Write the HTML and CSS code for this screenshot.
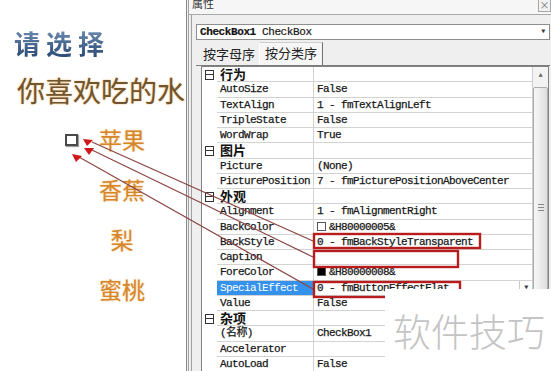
FILE: index.html
```html
<!DOCTYPE html>
<html lang="zh-CN">
<head>
    <meta charset="UTF-8">
    <meta name="viewport" content="width=device-width, initial-scale=1.0">
    <title>属性 - CheckBox1</title>
    <link rel="stylesheet" href="styles.css">
</head>
<body>
    <div class="page">
        <div class="slide">
            <div class="prompt">请选择</div>
            <div class="question">你喜欢吃的水果</div>
            <div class="options">
                <span class="checkbox"></span>
                <ul class="fruits">
                    <li>苹果</li>
                    <li>香蕉</li>
                    <li>梨</li>
                    <li>蜜桃</li>
                </ul>
            </div>
        </div>

        <div class="window">
            <div class="window-inner">
                <div class="titlebar">
                    <span class="title">属性</span>
                    <span class="close">×</span>
                </div>
                <div class="panel">
                    <div class="combo">
                        <span><b>CheckBox1</b> CheckBox</span>
                        <span class="combo-drop">▼</span>
                    </div>
                    <div class="tabs">
                        <span class="tab">按字母序</span>
                        <span class="tab active">按分类序</span>
                    </div>
                    <div class="grid">
                        <div class="rows">
                            <div class="row category"><span class="gutter"><i class="toggle"></i></span><span class="name">行为</span><span class="value"></span></div>
                            <div class="row"><span class="gutter"></span><span class="name">AutoSize</span><span class="value">False</span></div>
                            <div class="row"><span class="gutter"></span><span class="name">TextAlign</span><span class="value">1 - fmTextAlignLeft</span></div>
                            <div class="row"><span class="gutter"></span><span class="name">TripleState</span><span class="value">False</span></div>
                            <div class="row"><span class="gutter"></span><span class="name">WordWrap</span><span class="value">True</span></div>
                            <div class="row category"><span class="gutter"><i class="toggle"></i></span><span class="name">图片</span><span class="value"></span></div>
                            <div class="row"><span class="gutter"></span><span class="name">Picture</span><span class="value">(None)</span></div>
                            <div class="row"><span class="gutter"></span><span class="name">PicturePosition</span><span class="value">7 - fmPicturePositionAboveCenter</span></div>
                            <div class="row category"><span class="gutter"><i class="toggle"></i></span><span class="name">外观</span><span class="value"></span></div>
                            <div class="row"><span class="gutter"></span><span class="name">Alignment</span><span class="value">1 - fmAlignmentRight</span></div>
                            <div class="row"><span class="gutter"></span><span class="name">BackColor</span><span class="value"><i class="swatch"></i>&amp;H80000005&amp;</span></div>
                            <div class="row"><span class="gutter"></span><span class="name">BackStyle</span><span class="value">0 - fmBackStyleTransparent</span></div>
                            <div class="row"><span class="gutter"></span><span class="name">Caption</span><span class="value"></span></div>
                            <div class="row"><span class="gutter"></span><span class="name">ForeColor</span><span class="value"><i class="swatch dark"></i>&amp;H80000008&amp;</span></div>
                            <div class="row selected"><span class="gutter"></span><span class="name">SpecialEffect</span><span class="value"><span>0 - fmButtonEffectFlat</span><span class="cell-drop">▼</span></span></div>
                            <div class="row"><span class="gutter"></span><span class="name">Value</span><span class="value">False</span></div>
                            <div class="row category"><span class="gutter"><i class="toggle"></i></span><span class="name">杂项</span><span class="value"></span></div>
                            <div class="row"><span class="gutter"></span><span class="name">(名称)</span><span class="value">CheckBox1</span></div>
                            <div class="row"><span class="gutter"></span><span class="name">Accelerator</span><span class="value"></span></div>
                            <div class="row"><span class="gutter"></span><span class="name">AutoLoad</span><span class="value">False</span></div>
                        </div>
                        <div class="scrollbar">
                            <span class="scroll-up">▲</span>
                            <span class="thumb"><i class="grip"></i></span>
                        </div>
                    </div>
                </div>
            </div>
        </div>
    </div>

    <!-- red annotation marks drawn over the screenshot -->
    <svg class="marks" width="551" height="371" viewBox="0 0 551 371">
        <g stroke="#8c4444" stroke-width="1.2" fill="none">
            <line x1="92" y1="142" x2="313" y2="241"/>
            <line x1="92" y1="150" x2="313" y2="257"/>
            <line x1="79" y1="157" x2="313" y2="289"/>
        </g>
        <g fill="#d01818">
            <polygon points="83,139 93,140 87,146"/>
            <polygon points="84,148 94,148 89,155"/>
            <polygon points="72,154 82,156 76,162"/>
        </g>
        <g stroke="#b81c1c" stroke-width="2.4" fill="none">
            <rect x="314" y="234" width="166" height="14"/>
            <rect x="314" y="251" width="144" height="16"/>
            <rect x="314" y="282" width="146" height="15"/>
        </g>
    </svg>

    <div class="watermark">软件技巧</div>
</body>
</html>
```

FILE: styles.css
```css
body {
    margin: 0;
    width: 551px;
    height: 371px;
    overflow: hidden;
    position: relative;
    background-color: #fff;
    font-family: "Liberation Mono", "Noto Sans CJK SC", monospace;
}
.page {
    display: flex;
    height: 371px;
}

/* left side: the worksheet with the question */
.slide {
    width: 186px;
    flex: none;
    overflow: hidden;
    white-space: nowrap;
    font-family: "Noto Sans CJK SC", sans-serif;
}
.prompt {
    margin: 29px 0 0 14px;
    font-size: 26px;
    line-height: 28px;
    letter-spacing: 6px;
    font-weight: 700;
    color: #3a5a84;
    background: linear-gradient(#6f8db3, #2b4a75);
    -webkit-background-clip: text;
    background-clip: text;
    -webkit-text-fill-color: transparent;
}
.question {
    margin: 18px 0 0 17px;
    font-size: 28px;
    line-height: 30px;
    font-weight: 400;
    color: #6f5530;
    text-shadow: 0 0 2px #f0b060;
}
.options {
    display: flex;
    margin-top: 9px;
    padding-left: 65px;
}
.checkbox {
    flex: none;
    width: 9px;
    height: 8px;
    margin-top: 20px;
    border: 2px solid #4a4a4a;
    background-color: #fff;
    box-shadow: 1px 1px 1px #a0a0a0;
}
.fruits {
    list-style: none;
    margin: 0 0 0 14px;
    padding: 0;
    width: 60px;
    text-align: center;
    font-size: 23px;
    line-height: 50px;
    color: #d6862a;
    text-shadow: 0 0 2px #f6c488;
}

/* right side: the properties window */
.window {
    flex: 1;
    border-left: 1px solid #8a8a8a;
    padding-left: 1px;
    background-color: #efefef;
}
.window-inner {
    height: 100%;
    border-left: 1px solid #a2a2a2;
    display: flex;
    flex-direction: column;
}
.titlebar {
    height: 14px;
    flex: none;
    display: flex;
    justify-content: space-between;
    border-bottom: 1px solid #a8a8a8;
    background-color: #f6f6f6;
    font-family: "Noto Sans CJK SC", sans-serif;
}
.title {
    margin: -2px 0 0 3px;
    font-size: 11px;
    line-height: 11px;
    color: #333;
}
.close {
    width: 11px;
    height: 11px;
    border: 1px solid #a6a6a6;
    border-top: none;
    font-size: 10px;
    line-height: 10px;
    text-align: center;
    color: #777;
    background-color: #f2f2f2;
}
.panel {
    flex: 1;
    margin-left: 2px;
    border-left: 1px solid #a0a0a0;
    padding: 9px 1px 0 4px;
    display: flex;
    flex-direction: column;
}
.combo {
    height: 14px;
    flex: none;
    display: flex;
    justify-content: space-between;
    border: 1px solid #8e8e8e;
    background-color: #fff;
    padding-left: 3px;
    font-size: 11px;
    line-height: 14px;
    letter-spacing: -0.4px;
    color: #111;
    -webkit-text-stroke: 0.2px #222;
}
.combo-drop {
    width: 12px;
    font-size: 6px;
    text-align: center;
    color: #333;
}
.tabs {
    height: 25px;
    flex: none;
    display: flex;
    align-items: flex-end;
    padding-left: 4px;
    border-bottom: 1px solid #7c7c7c;
    font-family: "Noto Sans CJK SC", sans-serif;
    font-size: 13px;
    color: #222;
}
.tab {
    padding: 0 4px 2px 3px;
    line-height: 18px;
}
.tab.active {
    padding: 0 5px 2px 5px;
    line-height: 20px;
    border-top: 1px solid #cfcfcf;
    border-left: 1px solid #fff;
    border-right: 1px solid #707070;
    background-color: #f6f6f6;
}
.grid {
    flex: 1;
    margin: 0 1px 0 5px;
    border: 1px solid #828282;
    border-bottom: none;
    background-color: #fff;
    display: flex;
    overflow: hidden;
}
.rows {
    flex: 1;
}
.row {
    display: grid;
    grid-template-columns: 15px 97px 1fr;
    height: 15.25px;
    font-size: 11px;
    line-height: 14px;
    letter-spacing: -0.6px;
    color: #111;
    -webkit-text-stroke: 0.25px #222;
    white-space: nowrap;
}
.row .name,
.row .value {
    border-bottom: 1px solid #d3d3d3;
    overflow: hidden;
}
.row .name {
    padding-left: 3px;
    border-right: 1px solid #d3d3d3;
}
.row .value {
    padding-left: 3px;
}
.category .name {
    font-family: "Noto Sans CJK SC", sans-serif;
    font-weight: 700;
    font-size: 13px;
    letter-spacing: 0;
    -webkit-text-stroke: 0;
}
.toggle {
    display: block;
    position: relative;
    width: 7px;
    height: 8px;
    margin: 3px 0 0 3px;
    border: 1px solid #333;
}
.toggle::after {
    content: "";
    position: absolute;
    left: 0;
    right: 0;
    top: 3px;
    border-top: 1px solid #333;
}
.swatch {
    display: inline-block;
    width: 7px;
    height: 7px;
    margin-right: 3px;
    border: 1px solid #555;
    vertical-align: -1px;
}
.swatch.dark {
    background-color: #000;
}
.selected .name {
    background-color: #3592ec;
    color: #fff;
    -webkit-text-stroke: 0;
}
.selected .value {
    display: flex;
    justify-content: space-between;
}
.cell-drop {
    width: 12px;
    border-left: 1px solid #c8c8c8;
    font-size: 6px;
    text-align: center;
    color: #333;
}
.scrollbar {
    width: 15px;
    flex: none;
    border-left: 1px solid #cdcdcd;
    background-color: #f3f3f3;
    display: flex;
    flex-direction: column;
}
.scroll-up {
    height: 17px;
    font-size: 7px;
    line-height: 17px;
    text-align: center;
    color: #666;
}
.thumb {
    height: 238px;
    margin: 3px 0 0 0;
    border: 1px solid #acacac;
    border-radius: 2px;
    background: linear-gradient(to right, #f7f7f7, #dedede);
    display: flex;
    align-items: center;
    justify-content: center;
}
.grip {
    width: 6px;
    height: 5px;
    border-top: 1px solid #888;
    border-bottom: 1px solid #888;
    position: relative;
}
.grip::after {
    content: "";
    position: absolute;
    left: 0;
    right: 0;
    top: 2px;
    border-top: 1px solid #888;
}

/* overlays */
.marks {
    position: absolute;
    left: 0;
    top: 0;
    pointer-events: none;
}
.watermark {
    position: absolute;
    left: 385px;
    top: 289px;
    width: 158px;
    height: 60px;
    padding: 22px 0 0 8px;
    background-color: #fff;
    font-family: "Noto Sans CJK SC", sans-serif;
    font-size: 38px;
    line-height: 38px;
    font-weight: 300;
    color: #c4c4c4;
}
```
